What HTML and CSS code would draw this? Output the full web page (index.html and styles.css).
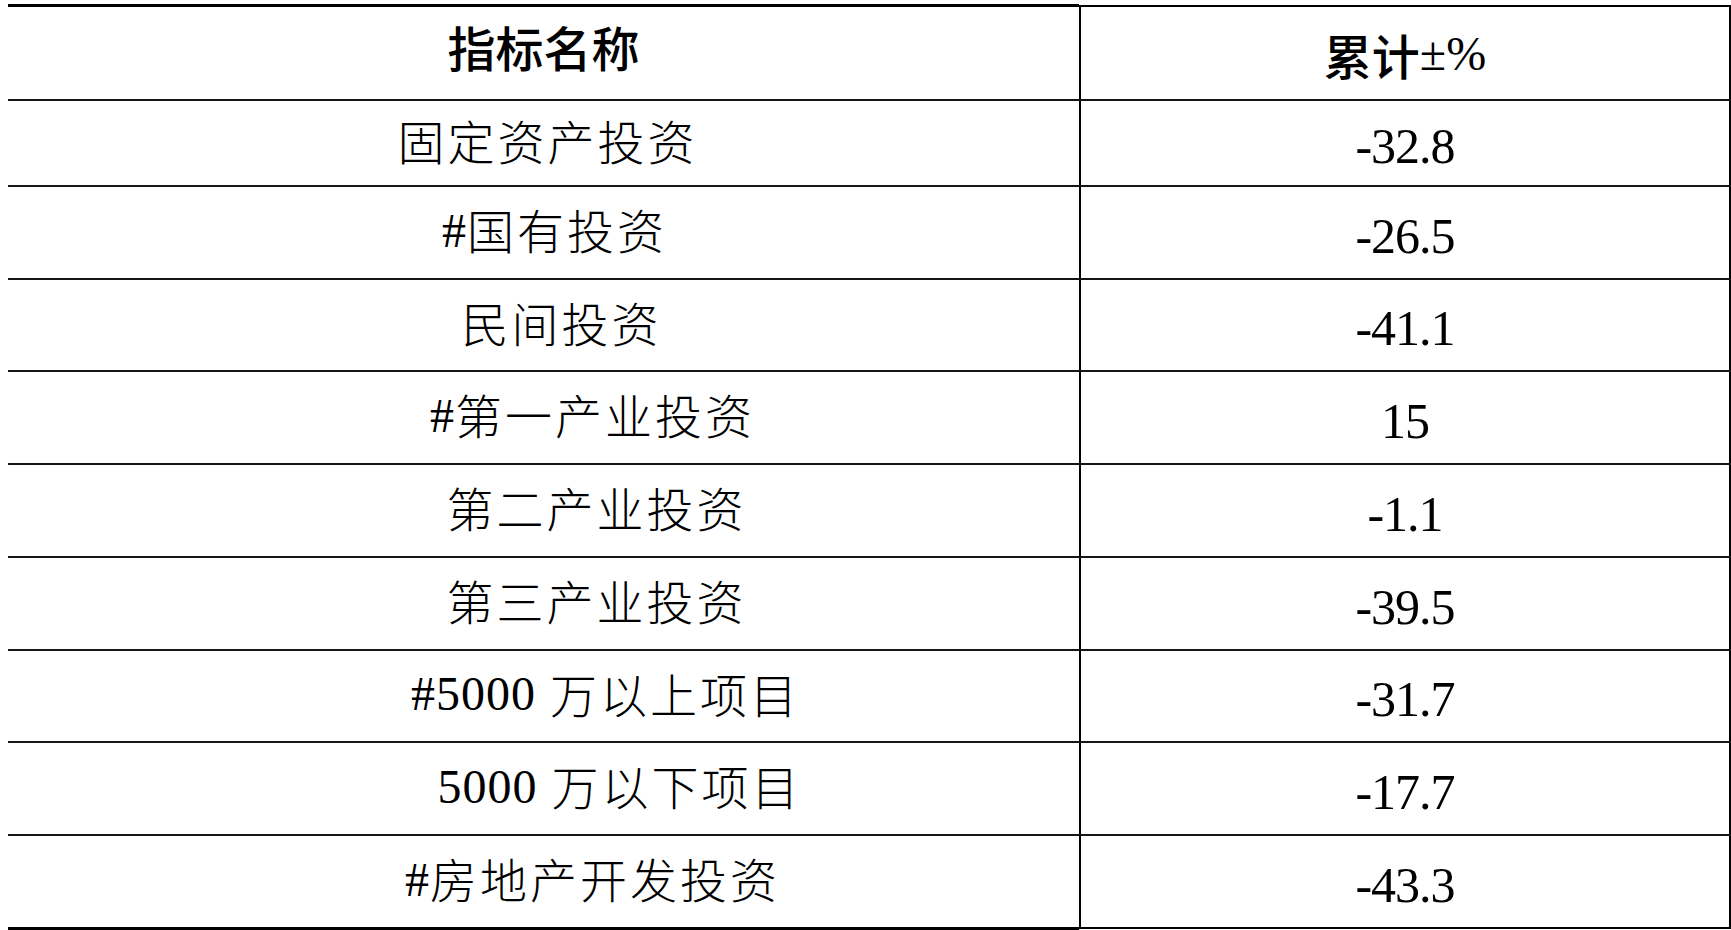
FILE: index.html
```html
<!DOCTYPE html>
<html>
<head>
<meta charset="utf-8">
<title>固定资产投资</title>
<link rel="stylesheet" href="styles.css">
</head>
<body>
<div class="sheet">
  <div class="row head">
    <div class="name"><span class="hd">指标名称</span></div>
    <div class="val"><span class="hd">累计</span><span class="hd-latin">±%</span></div>
  </div>
  <div class="row r1">
    <div class="name sh-1"><span class="txt">固定资产投资</span></div>
    <div class="val"><span class="num">-32.8</span></div>
  </div>
  <div class="row">
    <div class="name sh-2"><span class="lat">#</span><span class="txt">国有投资</span></div>
    <div class="val"><span class="num">-26.5</span></div>
  </div>
  <div class="row short">
    <div class="name sh-3"><span class="txt">民间投资</span></div>
    <div class="val"><span class="num">-41.1</span></div>
  </div>
  <div class="row">
    <div class="name sh-4"><span class="lat">#</span><span class="txt">第一产业投资</span></div>
    <div class="val"><span class="num">15</span></div>
  </div>
  <div class="row">
    <div class="name sh-5"><span class="txt">第二产业投资</span></div>
    <div class="val"><span class="num">-1.1</span></div>
  </div>
  <div class="row">
    <div class="name sh-5"><span class="txt">第三产业投资</span></div>
    <div class="val"><span class="num">-39.5</span></div>
  </div>
  <div class="row short">
    <div class="name sh-7"><span class="lat">#5000</span><span class="gap"></span><span class="txt">万以上项目</span></div>
    <div class="val"><span class="num">-31.7</span></div>
  </div>
  <div class="row">
    <div class="name sh-8"><span class="lat">5000</span><span class="gap"></span><span class="txt">万以下项目</span></div>
    <div class="val"><span class="num">-17.7</span></div>
  </div>
  <div class="row last">
    <div class="name sh-4"><span class="lat">#</span><span class="txt">房地产开发投资</span></div>
    <div class="val"><span class="num">-43.3</span></div>
  </div>
</div>
</body>
</html>
```

FILE: styles.css
```css
html, body {
  margin: 0;
  padding: 0;
  background: #ffffff;
  overflow: hidden;
}

body {
  color: #000;
  font-family: "Liberation Serif", serif;
}

.sheet {
  margin: 4px 0 0 8px;
  width: 1723px;
}

.row {
  display: grid;
  grid-template-columns: 1071px 652px;
  box-sizing: border-box;
  height: 93px;
  border-bottom: 2px solid #151515;
}

.row.short { height: 92px; }
.row.head { height: 97px; }
.row.r1 { height: 86px; }
.row.last { height: 94px; border-bottom: none; }

.name,
.val {
  display: flex;
  align-items: center;
  justify-content: center;
  box-sizing: border-box;
}

.val {
  border-left: 2px solid #000;
  border-right: 2px solid #000;
}

.head .name { border-top: 3px solid #000; padding-bottom: 14px; }
.head .val { border-top: 2px solid #000; margin-top: 1px; padding-top: 2px; }
.last .name { border-bottom: 3px solid #000; }
.last .val { border-bottom: 2px solid #000; margin-bottom: 1px; }

.hd {
  font-family: "Noto Sans CJK SC", sans-serif;
  font-weight: 500;
  font-size: 48px;
  line-height: 1;
}

.hd-latin {
  font-family: "Liberation Serif", serif;
  font-size: 48px;
  line-height: 1;
}

.txt {
  font-family: "Noto Sans CJK SC", sans-serif;
  font-weight: 300;
  font-size: 47px;
  letter-spacing: 3px;
  line-height: 1;
}

.lat {
  font-family: "Liberation Serif", serif;
  font-size: 48px;
  letter-spacing: 1px;
  line-height: 1;
  padding-top: 4px;
}

.gap { width: 14px; }

.num {
  font-family: "Liberation Serif", serif;
  font-size: 50px;
  letter-spacing: -1px;
  line-height: 1;
  padding-top: 6px;
}

.name { padding-bottom: 8px; }

.sh-1 { padding-left: 8px; }
.sh-2 { padding-left: 22px; }
.sh-3 { padding-left: 36px; }
.sh-4 { padding-left: 98px; }
.sh-5 { padding-left: 106px; }
.sh-7 { padding-left: 124px; }
.sh-8 { padding-left: 152px; }
```
